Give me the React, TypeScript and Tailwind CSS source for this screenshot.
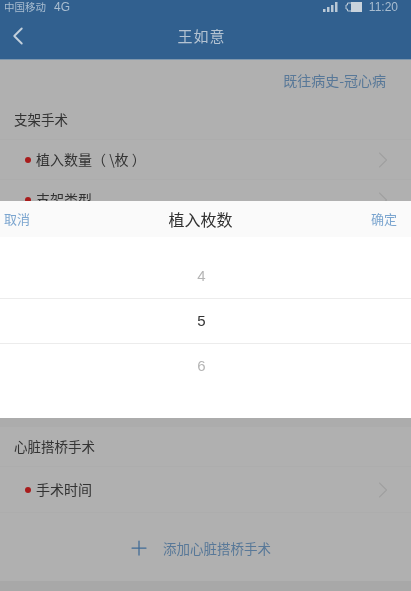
import { ChevronLeft, ChevronRight, Plus } from 'lucide-react'

const cjk = "font-['Noto_Sans_CJK_SC','Liberation_Sans',sans-serif]"

function Row({ label, className }: { label: string; className: string }) {
  return (
    <div className={`flex items-center pl-[25px] pr-[14px] border-b border-[#adadad] ${className}`}>
      <span className="w-[6px] h-[6px] rounded-full bg-[#a81c1c] mr-[5px]" />
      <span className="text-[14px] text-[#333333]">{label}</span>
      <ChevronRight className="ml-auto text-[#a0a0a0]" size={28} strokeWidth={1} />
    </div>
  )
}

export default function App() {
  return (
    <div className={`relative w-[411px] h-[591px] overflow-hidden bg-[#b0b0b0] blur-[0.5px] ${cjk}`}>
      <div className="bg-[#31608f] h-[60px] border-b border-[#7f97ad]">
        <div className="h-[14px] flex items-center px-[4px] text-[10.5px] leading-[14px] text-[#a9bdd0]">
          <span>中国移动</span>
          <span className="ml-[8px] text-[12px] leading-[14px] font-['Liberation_Sans',sans-serif]">4G</span>
          <div className="ml-auto flex items-center mr-[9px]">
            <svg width="15" height="10" viewBox="0 0 15 10" fill="#b9c8d6">
              <rect x="0" y="7" width="2.5" height="3" />
              <rect x="4" y="5" width="2.5" height="5" />
              <rect x="8" y="3" width="2.5" height="7" />
              <rect x="12" y="0" width="2.5" height="10" />
            </svg>
            <svg width="17" height="10" viewBox="0 0 17 10" className="ml-[7px]">
              <path d="M6 1H2.5V3H1V7H2.5V9H6" fill="none" stroke="#b9c8d6" />
              <rect x="6" y="0" width="11" height="10" fill="#c9d3dc" />
            </svg>
            <span className="ml-[7px] text-[12px] leading-[14px] font-['Liberation_Sans',sans-serif]">11:20</span>
          </div>
        </div>
        <div className="relative h-[45px] flex items-center justify-center pr-[8px]">
          <ChevronLeft className="absolute left-[3px] top-[7px] text-[#c3d0dc]" size={30} strokeWidth={1.5} />
          <span className="text-[15px] tracking-[1px] text-[#b4c3d2]">王如意</span>
        </div>
      </div>

      <div className="h-[40px] flex items-center justify-end pr-[25px] text-[14px] text-[#587898]">既往病史-冠心病</div>
      <div className="h-[40px] flex items-center pl-[14px] text-[13.5px] text-[#333333] border-b border-[#adadad]">支架手术</div>
      <Row label="植入数量（ \枚 ）" className="h-[40px]" />
      <Row label="支架类型" className="h-[40px]" />

      <div className="h-[207px] bg-[#acacac]" />

      <div className="h-[40px] flex items-center pl-[14px] text-[13.5px] text-[#333333] border-b border-[#adadad]">心脏搭桥手术</div>
      <Row label="手术时间" className="h-[46px]" />
      <div className="h-[68px] pt-[2px] flex items-center justify-center pr-[13px] gap-[12px] text-[13.5px] text-[#587898]">
        <Plus className="text-[#3f6b96]" size={24} strokeWidth={1.25} />
        <span>添加心脏搭桥手术</span>
      </div>
      <div className="h-[10px] bg-[#a8a8a8]" />

      <div className="absolute left-0 right-0 top-[201px] h-[217px] bg-white">
        <div className="h-[36px] bg-[#fafafa] flex items-center justify-between pl-[4px] pr-[14px]">
          <span className="text-[13px] text-[#7ba5cf] w-[40px]">取消</span>
          <span className="text-[16px] text-[#333333]">植入枚数</span>
          <span className="text-[13px] text-[#7ba5cf] w-[40px] text-right">确定</span>
        </div>
        <div className="pt-[17px] text-[15px] font-['Liberation_Sans',sans-serif] text-center">
          <div className="h-[44px] pt-[1px] pr-[8px] flex items-center justify-center text-[#b5b5b5]">4</div>
          <div className="h-[46px] pr-[8px] flex items-center justify-center text-[#333333] border-y border-[#ececec]">5</div>
          <div className="h-[44px] pr-[8px] flex items-center justify-center text-[#b5b5b5]">6</div>
        </div>
      </div>
    </div>
  )
}
